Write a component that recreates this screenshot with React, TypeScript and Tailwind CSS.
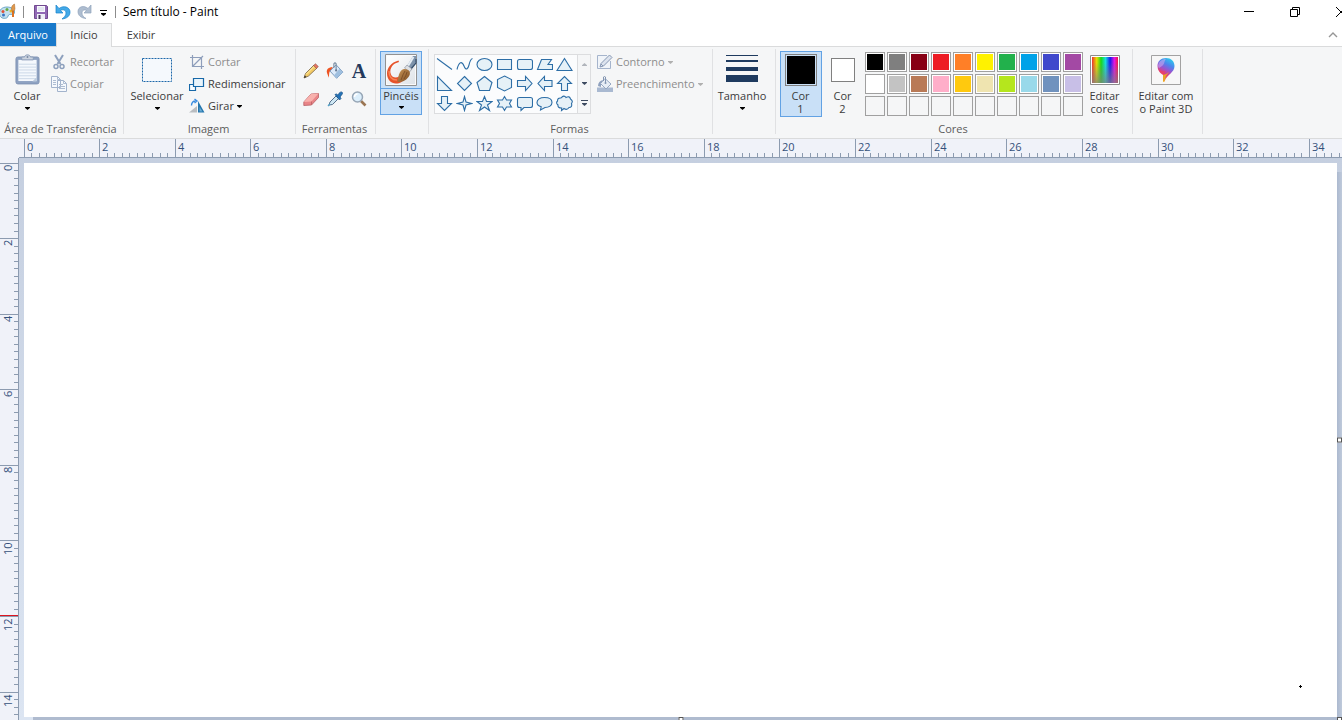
import type { ReactNode } from "react";
import clsx from "clsx";

const PX_PER_CM = 37.8;
const TICKS = 10;

const palette = [
  "#000000", "#7f7f7f", "#880015", "#ed1c24", "#ff7f27", "#fff200", "#22b14c", "#00a2e8", "#3f48cc", "#a349a4",
  "#ffffff", "#c3c3c3", "#b97a57", "#ffaec9", "#ffc90e", "#efe4b0", "#b5e61d", "#99d9ea", "#7092be", "#c8bfe7",
];

const shapes: { name: string; node: ReactNode }[] = [
  { name: "Linha", node: <path d="M1 2.5 16 13.5" /> },
  { name: "Curva", node: <path d="M1 13.5C3 5 6 5 8 10s4 3 5-1c.7-3 1.500-6 3.500-6.500" fill="none" /> },
  { name: "Oval", node: <ellipse cx="8.500" cy="8.500" rx="7.500" ry="6" /> },
  { name: "Retângulo", node: <path d="M1.500 3.500h14v10h-14z" /> },
  { name: "Retângulo arredondado", node: <rect x="1.500" y="3.500" width="15" height="10" rx="2" /> },
  { name: "Polígono", node: <path d="M5.500 3.500h10l-3.500 5h4.500v5h-15z" /> },
  { name: "Triângulo", node: <path d="M8.500 2.500 16 14.500H1z" /> },
  { name: "Triângulo retângulo", node: <path d="M1.500 1.500v14h14z" /> },
  { name: "Losango", node: <path d="M8.500 1.500 15.500 8.500 8.500 15.500 1.500 8.500z" /> },
  { name: "Pentágono", node: <path d="M8.500 1.500 16 7.500 13.500 15.500h-10L1 7.500z" /> },
  { name: "Hexágono", node: <path d="M8.500 1 15.500 4.500v8L8.500 16l-7-3.500v-8z" /> },
  { name: "Seta para a direita", node: <path d="M1.500 5.500h8v-4l6.500 7-6.500 7v-4h-8z" /> },
  { name: "Seta para a esquerda", node: <path d="M16 5.500H8.500v-4L2 8.500l6.500 7v-4H16z" /> },
  { name: "Seta para cima", node: <path d="M5.500 15.500v-7h-4L8.500 1.500l7 7h-4v7z" /> },
  { name: "Seta para baixo", node: <path d="M5.500 1.500v7h-4l7 7 7-7h-4v-7z" /> },
  { name: "Estrela de quatro pontas", node: <path d="M8.500 1.500 10 7 15.500 8.500 10 10 8.500 15.500 7 10 1.500 8.500 7 7z" /> },
  { name: "Estrela de cinco pontas", node: <path d="M8.500 1.500 10.500 6.500H16L11.500 10l2 5.500-5-3.500-5 3.500 2-5.500L1 6.500h5.500z" /> },
  { name: "Estrela de seis pontas", node: <path d="M8.500 1.500 10.500 5H15.500L13.500 8.500 15.500 12H10.500L8.500 15.500 6.500 12H1.500L3.500 8.500 1.500 5H6.500z" /> },
  { name: "Texto explicativo retangular", node: <path d="M3.500 2.500h11q2 0 2 2v6q0 2-2 2H8L5 15.500v-3H3.500q-2 0-2-2v-6q0-2 2-2z" /> },
  { name: "Texto explicativo oval", node: <path d="M8.500 2.500c4.500 0 7.500 2 7.500 5s-3 5-7 5l-4.500 2.500.7-3.300C2.500 11 1 9.500 1 7.500c0-3 3-5 7.500-5z" /> },
  { name: "Nuvem", node: <path d="M5 3Q8-.5 10 2.500q3.500-2 4.500 1.500 3 2 1 4.500 1 4-2.500 4-2 3-5 1l-2.500 2 .2-2.500Q1.500 13 2 10-.5 8 1.500 6 1.500 2.500 5 3z" /> },
];

function Caret({ className }: { className?: string }) {
  return (
    <svg viewBox="0 0 5 3" className={clsx("h-[3px] w-[5px] shrink-0 fill-current", className)} aria-hidden>
      <path d="M0 0h5v.7L2.500 3 0 .7z" />
    </svg>
  );
}

function Icon({ children, className = "size-4" }: { children: ReactNode; className?: string }) {
  return (
    <svg viewBox="0 0 16 16" className={clsx("shrink-0", className)} aria-hidden>
      {children}
    </svg>
  );
}

const PaletteIcon = () => (
  <svg viewBox="0 0 17 17" className="h-[17px] w-[17px]" aria-hidden>
    <path d="M7 4C2 4-1 7-.5 11c.5 4 4 5 7 4 2-.7 1-3 3-3.500 2.500-.5 5 1 5-2.500C14.500 6 11 4 7 4z" fill="#c3e0ef" stroke="#4e95ba" strokeWidth=".8" />
    <circle cx="3" cy="8.500" r="1.500" fill="#df5338" />
    <circle cx="7" cy="6.500" r="1.500" fill="#65a944" />
    <circle cx="3.500" cy="12" r="1.500" fill="#3974c5" />
    <circle cx="11" cy="8" r="1.500" fill="#ecb328" />
    <path d="M13 14V7" stroke="#dc7222" strokeWidth="2" />
    <path d="M11.500 6c0-3 1-4 3-5l.5 5-1 2h-2z" fill="#e1984b" stroke="#a76728" strokeWidth=".5" />
  </svg>
);

const SaveIcon = () => (
  <Icon>
    <path d="M1.500 1.500h12l1 1v12h-13z" fill="#9169b5" stroke="#71488f" />
    <path d="M4 2h8v6H4z" fill="#f9f9fd" />
    <path d="M5 4h6M5 6h6" stroke="#ccd3e3" />
    <path d="M4 10h8v5H4z" fill="#eef0f6" />
    <path d="M5.500 11h2v4h-2z" fill="#4b3763" />
  </Icon>
);

const UndoIcon = () => (
  <Icon>
    <path d="M1 1v8h7L5.500 6.500C8 5 11 6 11 9c0 2.500-1.500 4-4 6 5-.5 8-3 8-7 0-5-6.500-7-11-3.500z" fill="#43a9e8" stroke="#1681cb" strokeWidth=".7" />
  </Icon>
);

const RedoIcon = () => (
  <Icon>
    <path d="M14 1v8H7l2.500-2.500C7 5 5 6.500 5 9c0 2.500 1.500 4 4 5.500-5-.5-8-3-8-7 0-5 6-6.500 10-3z" fill="#aebdd0" stroke="#91a3bc" strokeWidth=".7" />
  </Icon>
);

const ClipboardIcon = () => (
  <svg viewBox="0 0 26 32" className="h-[31px] w-[25px]" aria-hidden>
    <rect x="1" y="3" width="24" height="28" rx="2" fill="#8ea2c2" stroke="#8093b3" />
    <path d="M3.500 6h19v22h-19z" fill="#f4f8fd" />
    <path d="M4 10.500h18M4 13.500h18M4 16.500h18M4 19.500h18M4 22.500h18M4 25.500h18" stroke="#cbd7e7" />
    <path d="M18 28.500 22.500 24v4.500z" fill="#bac9dc" />
    <path d="M7 6V3h3c0-3 6-3 6 0h3v3z" fill="#cbd3df" stroke="#899cb7" />
    <circle cx="13" cy="3" r="1" fill="#7889a3" />
  </svg>
);

const ScissorsIcon = () => (
  <Icon>
    <path d="M4 1l5.500 9M12 1 6.500 10" stroke="#8da0bd" strokeWidth="2" />
    <circle cx="5" cy="12.500" r="2" fill="none" stroke="#8da0bd" strokeWidth="1.500" />
    <circle cx="11" cy="12.500" r="2" fill="none" stroke="#8da0bd" strokeWidth="1.500" />
  </Icon>
);

const CopyIcon = () => (
  <Icon>
    <path d="M.5.5h6l3 3v8h-9zM6.500 4.500h6l3 3v8h-9z" fill="#f6f9fd" stroke="#a2b3cc" />
    <path d="M6.500.5v3h3M12.500 4.500v3h3M2 4.500h3M2 6.500h3M2 8.500h3M8 8.500h4M8 10.500h6M8 12.500h6" fill="none" stroke="#aebdd2" />
  </Icon>
);

const SelectIcon = () => (
  <svg viewBox="0 0 30 24" className="h-6 w-[30px]" aria-hidden>
    <rect x=".5" y=".5" width="29" height="23" fill="#f5f9fd" stroke="#1c67a9" strokeDasharray="2 1" />
  </svg>
);

const CropIcon = () => (
  <Icon>
    <path d="M3.500 1v11.500H15M1 3.500h11.500V15M4 12l10-10" fill="none" stroke="#8e9ebb" strokeWidth="1.200" />
  </Icon>
);

const ResizeIcon = () => (
  <Icon>
    <path d="M.5 8.500h6v6h-6z" fill="#f8fcff" stroke="#1768a8" strokeWidth="1.200" />
    <path d="M4.500 2.500h10v8h-10z" fill="#e9f4fb" stroke="#1768a8" strokeWidth="1.200" />
  </Icon>
);

const RotateIcon = () => (
  <Icon>
    <path d="M0 14.500 8 8v6.500z" fill="#b9bdc1" />
    <path d="M9 3v11.500h6.500z" fill="#2375ad" />
    <path d="M10.500 9v4.500h3z" fill="#69acd5" />
    <path d="M2.500 7.500c0-3 1.500-4.500 4-4.500M5.500 1l2.500 2-2.500 2" fill="none" stroke="#388be0" strokeWidth="1.400" />
  </Icon>
);

const PencilIcon = () => (
  <Icon>
    <path d="M1 15 2.500 10.500 11 2l3 3L5.500 13z" fill="#f3ca65" stroke="#786243" strokeWidth=".8" />
    <path d="M3 11.500 11.500 3" stroke="#fff0ab" />
    <path d="M10.500 2.500 12.500.8 15.300 3.500 13.500 5.500z" fill="#e47562" stroke="#8b5147" strokeWidth=".6" />
    <path d="M1 15 1.800 12.500 3.500 14z" fill="#333" />
  </Icon>
);

const BucketIcon = () => (
  <Icon className="size-[18px]">
    <path d="M1 10C0 7 1.500 5 6 4.500L4 8c-1.500.5-1 3-1.500 6z" fill="#ee5423" />
    <path d="M9 2.500 15 9 9.500 14.500 3.500 8z" fill="#dceafa" stroke="#6f91b7" strokeWidth=".8" />
    <path d="M12 6 15 9 9.500 14.500 7 12z" fill="#9fbfdf" />
    <path d="M7 5V1.500q1-1.500 2 0V7" fill="none" stroke="#778ba0" />
    <circle cx="9" cy="7.500" r="1" fill="#687c95" />
  </Icon>
);

const EraserIcon = () => (
  <Icon>
    <path d="M.8 11 8 3l7.500-.5v4L8.500 14l-7.700.5z" fill="#e98588" stroke="#b76064" strokeWidth=".8" />
    <path d="M.8 11 8 3l7.500-.5L8.500 10.500z" fill="#f8b1ad" />
    <path d="M8.500 10.500V14" stroke="#c4686b" />
  </Icon>
);

const PickerIcon = () => (
  <Icon>
    <path d="M2 14 3 11l6-6 2.500 2.500-6 6z" fill="#cee7f3" stroke="#556f8b" />
    <path d="M8 3.500 9.500 3l1.500 1.200 1.500-2.500q3-2 3 1L13 6l1 1.500-1.500 1.500z" fill="#2473b8" stroke="#1a558d" strokeWidth=".8" />
    <path d="M1 15 3 13" stroke="#52a2c9" strokeWidth="1.500" />
  </Icon>
);

const MagnifierIcon = () => (
  <Icon>
    <path d="m10 10 4.500 4.500" stroke="#9a7552" strokeWidth="2.600" />
    <circle cx="6.500" cy="6" r="5" fill="#dceffc" stroke="#97a6b6" strokeWidth="1.500" />
    <path d="M3.500 6c0-2 1.500-3 3-3" fill="none" stroke="#fff" strokeWidth="1.500" />
  </Icon>
);

const BrushIcon = () => (
  <svg viewBox="0 0 32 32" className="size-8" aria-hidden>
    <defs>
      <linearGradient id="bristle" x2="1" y2="1">
        <stop stopColor="#c99557" />
        <stop offset="1" stopColor="#7c4c22" />
      </linearGradient>
      <linearGradient id="paper" x2="1" y2="1">
        <stop stopColor="#fff" />
        <stop offset="1" stopColor="#dfe3e8" />
      </linearGradient>
    </defs>
    <path d="M.5.5h31v31H.5z" fill="#fafafa" stroke="#929292" />
    <path d="M2 2h28v28H2z" fill="url(#paper)" />
    <path d="M13.500 6.500C6 8.500 2 14 2 19.500 2 25.500 6 29.500 11 29.500c4 0 7-2 8-5l-5-2c-3 2-7 1-8-2-2-5 1-9 4-11l4-1.500z" fill="#e65229" />
    <path d="M4 17c0 6 3 9 8 9" stroke="#f78455" strokeWidth="1.500" fill="none" />
    <path d="M28 2h3v6l-5 7-4-3z" fill="#7d93ab" />
    <path d="m28.500 3-5.500 9" stroke="#e5edf4" strokeWidth="2" />
    <path d="M31 5v4l-5 6" stroke="#324c6b" fill="none" strokeWidth="1.200" />
    <path d="m22 11 5 4-2.500 3-5-4z" fill="#dde0e4" stroke="#818895" strokeWidth=".6" />
    <path d="M12.500 28c1-8 3-13 7-13 5 0 7 4 4 8s-6 5-11 5z" fill="url(#bristle)" />
    <path d="M16 26q2-6 4-9M19 25q2-3 3-7" fill="none" stroke="#6e421f" strokeWidth=".7" />
  </svg>
);

const OutlineIcon = () => (
  <Icon>
    <path d="M10 1.500H.5v13h13V7" fill="#f0f4f9" stroke="#a5b4cc" />
    <path d="M3 13 4 9.500 12.500 1l2.500 2.500L6.500 12z" fill="#dce3ee" stroke="#8798b4" />
    <path d="m4 10 2 2" stroke="#8798b4" />
  </Icon>
);

const FillIcon = () => (
  <Icon>
    <path d="M0 11.500h16V16H0z" fill="#a9b9d1" />
    <path d="M1 10C1 6.500 3 5 6 4L4 9v2z" fill="#8fa1be" />
    <path d="M8 2.500 14 8 9 13 3.500 7.500z" fill="#e7edf5" stroke="#96a7c2" />
    <path d="M6.500 5V1q1-1 2 0v6" fill="none" stroke="#8395b1" />
    <circle cx="8.500" cy="7" r="1" fill="#8395b1" />
  </Icon>
);

const SpectrumIcon = () => (
  <svg viewBox="0 0 30 30" className="size-[30px]" aria-hidden>
    <defs>
      <linearGradient id="hue">
        <stop stopColor="#f03030" />
        <stop offset=".18" stopColor="#e7e000" />
        <stop offset=".35" stopColor="#18d818" />
        <stop offset=".52" stopColor="#15dede" />
        <stop offset=".7" stopColor="#1818ee" />
        <stop offset=".86" stopColor="#e314e3" />
        <stop offset="1" stopColor="#ee1840" />
      </linearGradient>
      <linearGradient id="fade" x2="0" y2="1">
        <stop offset=".2" stopColor="#808080" stopOpacity="0" />
        <stop offset="1" stopColor="#808080" stopOpacity=".75" />
      </linearGradient>
    </defs>
    <path d="M.5.5h29v29H.5z" fill="#fff" stroke="#8d8d8d" />
    <path d="M2 2h26v26H2z" fill="url(#hue)" />
    <path d="M2 2h26v26H2z" fill="url(#fade)" />
  </svg>
);

const Paint3DIcon = () => (
  <svg viewBox="0 0 30 30" className="size-[30px]" aria-hidden>
    <defs>
      <linearGradient id="drop" x1=".8" y1="0" x2=".4" y2="1">
        <stop stopColor="#28d4eb" />
        <stop offset=".3" stopColor="#4d85ed" />
        <stop offset=".5" stopColor="#9656d2" />
        <stop offset=".72" stopColor="#e43c77" />
        <stop offset="1" stopColor="#f3ad1b" />
      </linearGradient>
    </defs>
    <path d="M.5.5h29v29H.5z" fill="#f7f7f7" stroke="#a2a2a2" />
    <path d="M15 3c5 0 8.500 3 8.500 8 0 7-7 7.500-10 15.500-.7 1-1.500.5-1.500-1v-6C8.500 17.500 6.500 15 6.500 11 6.500 6 10 3 15 3z" fill="url(#drop)" />
    <path d="M7 11c1-5 4-7 8-7-2 2-1 5-4 7s-3 3-4 0z" fill="#c8a7ef" opacity=".6" />
    <path d="M7 13q3 4 8 3l-3 4q-4-2-5-7z" fill="#ea4265" opacity=".7" />
    <path d="M12 20q3 0 6-3-4 4-5 9h-1z" fill="#e7a824" />
  </svg>
);

function Group({ label, className, children }: { label?: string; className?: string; children: ReactNode }) {
  return (
    <>
      <section aria-label={label} className={clsx("flex shrink-0 flex-col pt-1", className)}>
        <div className="flex flex-1 items-start">{children}</div>
        {label && <h2 className="h-[17px] pr-0.5 text-center leading-4 whitespace-nowrap text-[#5c5c5c]">{label}</h2>}
      </section>
      <div className="mt-0.5 mb-1 w-px shrink-0 bg-[#e0e1e3]" />
    </>
  );
}

function RowButton({ icon, label, disabled, caret }: { icon: ReactNode; label: string; disabled?: boolean; caret?: boolean }) {
  return (
    <button
      disabled={disabled}
      className={clsx("flex h-[22px] items-center gap-[3px] whitespace-nowrap", disabled ? "text-[#8d8d8d]" : "text-[#3b3b3b]")}
    >
      {icon}
      <span>{label}</span>
      {caret && <Caret className={disabled ? "text-[#b0b0b0]" : "text-black"} />}
    </button>
  );
}

function BigButton({ icon, label, className }: { icon: ReactNode; label: string; className?: string }) {
  return (
    <button className={clsx("flex flex-col items-center text-[#3b3b3b]", className)}>
      <span className="flex h-[37px] items-center justify-center">{icon}</span>
      <span className="leading-4">{label}</span>
      <Caret className="mt-[3px] text-black" />
    </button>
  );
}

function ColorSlot({ label, index, color, active }: { label: string; index: number; color: string; active?: boolean }) {
  return (
    <button
      className={clsx(
        "flex h-[66px] w-[42px] flex-col items-center border leading-[13px] text-[#3b3b3b]",
        active ? "border-[#62a2e4] bg-[#c9e0f7]" : "border-transparent",
      )}
    >
      <span className="mt-0.5 mb-[3px] flex h-8 items-center">
        <span className={clsx("border border-[#808080] p-px", active ? "size-8 bg-[#c9e0f7]" : "size-6 bg-white")}>
          <span className="block size-full" style={{ backgroundColor: color }} />
        </span>
      </span>
      <span className="pr-px">{label}</span>
      <span className="pr-px">{index}</span>
    </button>
  );
}

/** Lengths in whole pixels of the ten divisions that follow a numbered mark. */
function divisions(mark: number) {
  const at = (k: number) => Math.floor(((mark * TICKS + k) * PX_PER_CM * 2) / TICKS);
  return Array.from({ length: TICKS }, (_, k) => at(k + 1) - at(k));
}

function Ruler({ vertical, marks }: { vertical?: boolean; marks: number }) {
  return (
    <div className={clsx("flex size-full overflow-hidden text-[#34507a]", vertical ? "flex-col pt-[5px]" : "pl-[5px]")} aria-hidden>
      {Array.from({ length: marks }, (_, mark) => (
        <div key={mark} className={clsx("flex shrink-0 border-[#8c9bb0]", vertical ? "border-t" : "flex-col border-l")}>
          <span
            className={clsx(
              vertical
                ? "flex w-3.5 rotate-180 items-end justify-end pb-px leading-3 [writing-mode:vertical-rl]"
                : "h-3.5 pl-0.5 leading-4",
            )}
          >
            {mark * 2}
          </span>
          <span className={clsx("flex", vertical ? "w-1 flex-col" : "h-1")}>
            {divisions(mark).map((length, k) => {
              const size = k === 0 ? length - 1 : length;
              return (
                <i
                  key={k}
                  className={clsx("shrink-0 border-[#8c9bb0]", k > 0 && (vertical ? "border-t" : "border-l"))}
                  style={vertical ? { height: size } : { width: size }}
                />
              );
            })}
          </span>
        </div>
      ))}
    </div>
  );
}

function TitleBar() {
  return (
    <header className="flex h-[23px] shrink-0 items-center">
      <PaletteIcon />
      <div className="ml-1.5 h-3 w-px bg-[#8c8c8c]" />
      <div className="ml-[9px] flex items-center gap-1.5">
        <button aria-label="Salvar"><SaveIcon /></button>
        <button aria-label="Desfazer"><UndoIcon /></button>
        <button aria-label="Refazer"><RedoIcon /></button>
        <button aria-label="Personalizar barra de acesso rápido" className="ml-px">
          <svg viewBox="0 0 8 6" className="mt-[3px] h-1.5 w-2" aria-hidden>
            <path d="M0 0h7v1H0zM1 3h5v1L3.500 6 1 4z" />
          </svg>
        </button>
      </div>
      <div className="ml-[7px] h-3 w-px bg-[#8c8c8c]" />
      <h1 className="ml-[7px] text-[12px] text-black">Sem título - Paint</h1>
      <div className="-mr-[22px] ml-auto flex h-5">
        <button aria-label="Minimizar" className="flex w-[46px] items-center justify-center">
          <svg viewBox="0 0 10 10" className="size-2.5" aria-hidden><path d="M0 4h10v1H0z" /></svg>
        </button>
        <button aria-label="Restaurar" className="flex w-[46px] items-center justify-center">
          <svg viewBox="0 0 10 10" className="size-2.5 fill-none stroke-black" aria-hidden>
            <path d="M.5 2.500h7v7h-7zM2.500 2.500v-2h7v7h-2" />
          </svg>
        </button>
        <button aria-label="Fechar" className="flex w-[46px] items-center justify-center">
          <svg viewBox="0 0 10 10" className="size-2.5 fill-none stroke-black" aria-hidden><path d="m0 0 10 10M10 0 0 10" /></svg>
        </button>
      </div>
    </header>
  );
}

function Tabs() {
  return (
    <nav className="flex h-6 shrink-0 border-b border-[#dadbdc] text-[#3b3b3b]">
      <button className="h-[23px] w-14 bg-[#1979ca] pt-px text-white">Arquivo</button>
      <button className="-mb-px h-6 w-14 border-x border-t border-[#dadbdc] bg-[#f5f6f7]">Início</button>
      <button className="h-[23px] w-[58px] pt-px">Exibir</button>
      <button aria-label="Minimizar a faixa de opções" className="mr-1 ml-auto">
        <svg viewBox="0 0 10 6" className="h-1.5 w-2.5 fill-none stroke-[#969696]" strokeWidth="1.400" aria-hidden>
          <path d="m1 5 4-4 4 4" />
        </svg>
      </button>
    </nav>
  );
}

function ShapeGallery() {
  return (
    <div className="mt-[3px] flex h-[60px] border border-[#dcdddf] bg-[#fbfcfd]">
      <div className="grid grid-cols-[repeat(7,20px)] grid-rows-[18px_21px_19px] pr-px pl-px">
        {shapes.map(({ name, node }) => (
          <button key={name} aria-label={name} className="flex items-center">
            <svg viewBox="0 0 17 17" className="size-[17px] fill-[#e6f1f7] stroke-[#2d6ea6]" strokeWidth="1.100" aria-hidden>
              {node}
            </svg>
          </button>
        ))}
      </div>
      <div className="grid w-[13px] grid-rows-3 border-l border-[#dcdddf] bg-[#f5f6f7] text-[#3c4a60]">
        <button aria-label="Rolar para cima" className="flex items-center justify-center">
          <Caret className="rotate-180 text-[#b1b5bc]" />
        </button>
        <button aria-label="Rolar para baixo" className="flex items-center justify-center">
          <Caret />
        </button>
        <button aria-label="Mais formas" className="flex flex-col items-center justify-center gap-0.5">
          <span className="h-px w-[7px] bg-current" />
          <Caret />
        </button>
      </div>
    </div>
  );
}

function Ribbon() {
  return (
    <div className="flex h-[92px] shrink-0 border-b border-[#dadbdc] bg-[#f5f6f7]">
      <Group label="Área de Transferência" className="w-[123px]">
        <BigButton icon={<ClipboardIcon />} label="Colar" className="ml-1.5 w-[42px]" />
        <div className="ml-[3px]">
          <RowButton icon={<ScissorsIcon />} label="Recortar" disabled />
          <RowButton icon={<CopyIcon />} label="Copiar" disabled />
        </div>
      </Group>
      <Group label="Imagem" className="w-[171px]">
        <BigButton icon={<SelectIcon />} label="Selecionar" className="ml-1 w-[58px]" />
        <div className="ml-[3px]">
          <RowButton icon={<CropIcon />} label="Cortar" disabled />
          <RowButton icon={<ResizeIcon />} label="Redimensionar" />
          <RowButton icon={<RotateIcon />} label="Girar" caret />
        </div>
      </Group>
      <Group label="Ferramentas" className="w-[79px]">
        <div className="mt-1.5 ml-[3px] grid grid-cols-[repeat(3,24px)] grid-rows-[repeat(2,28px)] place-items-center">
          <button aria-label="Lápis"><PencilIcon /></button>
          <button aria-label="Preencher com cor"><BucketIcon /></button>
          <button aria-label="Texto" className="font-['Liberation_Serif',serif] text-[20px] leading-5 font-bold text-[#24395c]">A</button>
          <button aria-label="Borracha"><EraserIcon /></button>
          <button aria-label="Selecionador de cores"><PickerIcon /></button>
          <button aria-label="Lupa"><MagnifierIcon /></button>
        </div>
      </Group>
      <Group className="w-[52px]">
        <button className="ml-1 flex h-16 w-[42px] flex-col items-center border border-[#62a2e4] bg-[#c9e0f7] text-[#3b3b3b]">
          <span className="flex h-[37px] w-full items-center justify-center border-b border-[#62a2e4]"><BrushIcon /></span>
          <span className="leading-[14px]">Pincéis</span>
          <Caret className="mt-[3px] text-black" />
        </button>
      </Group>
      <Group label="Formas" className="w-[283px]">
        <div className="ml-[5px]"><ShapeGallery /></div>
        <div className="ml-1.5">
          <RowButton icon={<OutlineIcon />} label="Contorno" disabled caret />
          <RowButton icon={<FillIcon />} label="Preenchimento" disabled caret />
        </div>
      </Group>
      <Group className="w-[62px]">
        <BigButton
          label="Tamanho"
          className="w-[58px]"
          icon={
            <svg viewBox="0 0 32 29" className="h-[29px] w-8 fill-[#1e3a5f]" aria-hidden>
              <path d="M0 0h32v1H0zM0 5h32v2H0zM0 12h32v4H0zM0 20h32v7H0z" />
            </svg>
          }
        />
      </Group>
      <Group label="Cores" className="w-[356px]">
        <div className="ml-1 flex">
          <ColorSlot label="Cor" index={1} color="#000000" active />
          <ColorSlot label="Cor" index={2} color="#ffffff" />
        </div>
        <div className="mt-px ml-px grid grid-cols-[repeat(10,20px)] gap-0.5">
          {Array.from({ length: 30 }, (_, i) => (
            <button
              key={i}
              aria-label={palette[i] ?? "Cor personalizada"}
              className={clsx("size-5 border border-[#a0a0a0] p-px", i < 20 ? "bg-white" : "bg-[#f5f6f7]")}
            >
              {palette[i] && <span className="block size-full" style={{ backgroundColor: palette[i] }} />}
            </button>
          ))}
        </div>
        <button className="flex w-[43px] flex-col items-center leading-[13px] text-[#3b3b3b]">
          <span className="mt-1 mb-1"><SpectrumIcon /></span>
          <span>Editar</span>
          <span>cores</span>
        </button>
      </Group>
      <Group className="w-[69px]">
        <button className="flex w-[66px] flex-col items-center leading-[13px] whitespace-nowrap text-[#3b3b3b]">
          <span className="mt-1 mb-1"><Paint3DIcon /></span>
          <span>Editar com</span>
          <span>o Paint 3D</span>
        </button>
      </Group>
    </div>
  );
}

function Workspace() {
  return (
    <main className="flex min-h-0 flex-1 flex-col bg-[#f0f2f9]">
      <div className="flex h-[19px] shrink-0 pl-[19px]">
        <div className="min-w-0 flex-1 border-b border-[#8c9bb0]">
          <Ruler marks={18} />
        </div>
      </div>
      <div className="flex min-h-0 flex-1">
        <div className="relative w-[19px] shrink-0 border-r border-[#8c9bb0]">
          <Ruler vertical marks={8} />
          <div className="absolute inset-x-0 top-[457px] h-px bg-[#dd1520]" />
        </div>
        <div className="flex min-w-0 flex-1 bg-linear-to-b from-[#c5cfe0] to-[#dce5f2] pt-[5px] pr-[5px] pb-[3px] pl-[5px]">
          <div className="relative flex-1 bg-white">
            <div className="absolute top-[9px] -right-[5px] bottom-0 w-[5px] bg-linear-to-r from-[#acb9cf] to-[#bfcadb]" />
            <div className="absolute -right-[5px] -bottom-[3px] left-[9px] h-[3px] bg-[#afbbcf]" />
            <div className="absolute top-1/2 -right-[5px] size-[5px] -translate-y-1/2 border border-[#555] bg-white" />
            <div className="absolute -bottom-[5px] left-1/2 size-[5px] -translate-x-1/2 border border-[#555] bg-white" />
            <div className="absolute -right-[5px] -bottom-[5px] size-[5px] border border-[#555] bg-white" />
            <svg viewBox="0 0 3 3" className="absolute right-[35px] bottom-[29px] size-[3px]" aria-hidden>
              <path d="M1 0h1v1h1v1H2v1H1V2H0V1h1z" />
            </svg>
          </div>
        </div>
      </div>
    </main>
  );
}

export default function App() {
  return (
    <div className="flex h-screen flex-col overflow-hidden bg-white font-['Open_Sans','Noto_Sans',sans-serif] text-[11px]">
      <TitleBar />
      <Tabs />
      <Ribbon />
      <Workspace />
    </div>
  );
}
